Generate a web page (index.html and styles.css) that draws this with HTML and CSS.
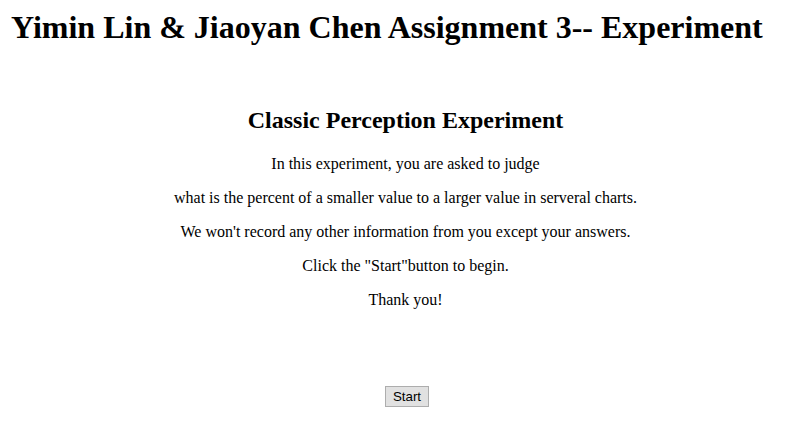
FILE: index.html
```html
<!DOCTYPE html>
<html>
<head>
<meta charset="utf-8">
<title>Experiment</title>
<link rel="stylesheet" href="styles.css">
</head>
<body>
<h1 class="page-title">Yimin Lin &amp; Jiaoyan Chen Assignment 3-- Experiment</h1>
<main class="intro">
  <h2 class="intro-title">Classic Perception Experiment</h2>
  <p class="intro-text">In this experiment, you are asked to judge</p>
  <p class="intro-text">what is the percent of a smaller value to a larger value in serveral charts.</p>
  <p class="intro-text">We won't record any other information from you except your answers.</p>
  <p class="intro-text">Click the "Start"button to begin.</p>
  <p class="intro-text">Thank you!</p>
  <div class="actions">
    <button class="start-btn" type="button">Start</button>
  </div>
</main>
</body>
</html>
```
FILE: styles.css
```css
html, body {
  background: #ffffff;
}
body {
  margin: 0;
  padding: 0;
  font-family: "Liberation Serif", "Times New Roman", serif;
  color: #000;
}
.page-title {
  margin: 0;
  padding: 9px 0 0 11px;
  font-size: 32px;
  font-weight: bold;
  line-height: 37px;
}
.intro {
  padding-left: 22px;
  text-align: center;
}
.intro-title {
  margin: 60px 0 0;
  font-size: 24px;
  font-weight: bold;
  line-height: 28px;
}
.intro-text {
  margin: 16px 0 0;
  font-size: 16px;
  line-height: 18px;
}
.intro-title + .intro-text {
  margin-top: 21px;
}
.actions {
  margin-top: 77px;
  display: flex;
  justify-content: center;
  padding-left: 3px;
}
.start-btn {
  font-family: "Liberation Sans", Arial, sans-serif;
  font-size: 13.33px;
  color: #000;
  background: #e1e1e1;
  border: 1px solid #adadad;
  border-radius: 0;
  padding: 1px 7px;
  height: 21px;
  line-height: 17px;
}
```
